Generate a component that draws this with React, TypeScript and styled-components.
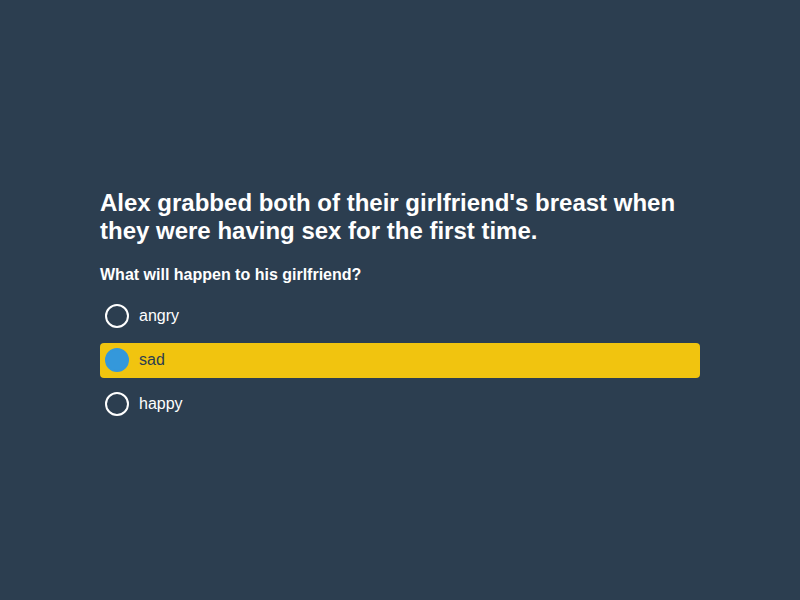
import styled, { createGlobalStyle } from "styled-components";

const GlobalStyle = createGlobalStyle`
  html, body {
    margin: 0;
    padding: 0;
    background: #2c3e50;
    font-family: "Liberation Sans", Arial, sans-serif;
  }
`;

const options = ["angry", "sad", "happy"];
const selected = "sad";

const App = () => {
  return (
    <Page>
      <GlobalStyle />
      <Quiz>
        <Question>
          Alex grabbed both of their girlfriend's breast when they were having
          sex for the first time.
        </Question>
        <Prompt>What will happen to his girlfriend?</Prompt>
        <Options>
          {options.map((o) => (
            <Option key={o} $active={o === selected}>
              <Radio $active={o === selected} />
              <span>{o}</span>
            </Option>
          ))}
        </Options>
      </Quiz>
    </Page>
  );
};

export default App;

const Page = styled.div`
  min-height: 100vh;
  display: flex;
  justify-content: center;
  align-items: center;
`;

const Quiz = styled.div`
  width: 600px;
  margin-top: 10px;
  color: #fff;
`;

const Question = styled.h2`
  font-size: 24px;
  line-height: 28px;
  font-weight: bold;
  margin: 0 0 21px;
`;

const Prompt = styled.p`
  font-size: 16px;
  line-height: 18px;
  font-weight: bold;
  margin: 0 0 15px;
`;

const Options = styled.div`
  display: flex;
  flex-direction: column;
  gap: 9px;
`;

const Option = styled.div<{ $active: boolean }>`
  display: flex;
  align-items: center;
  gap: 10px;
  height: 35px;
  padding: 0 5px;
  border-radius: 4px;
  font-size: 16px;
  background: ${(p) => (p.$active ? "#f1c40f" : "transparent")};
  color: ${(p) => (p.$active ? "#2c3e50" : "#fff")};
`;

const Radio = styled.span<{ $active: boolean }>`
  width: 24px;
  height: 24px;
  box-sizing: border-box;
  border-radius: 50%;
  border: 2px solid ${(p) => (p.$active ? "#3498db" : "#fff")};
  background: ${(p) => (p.$active ? "#3498db" : "transparent")};
`;
